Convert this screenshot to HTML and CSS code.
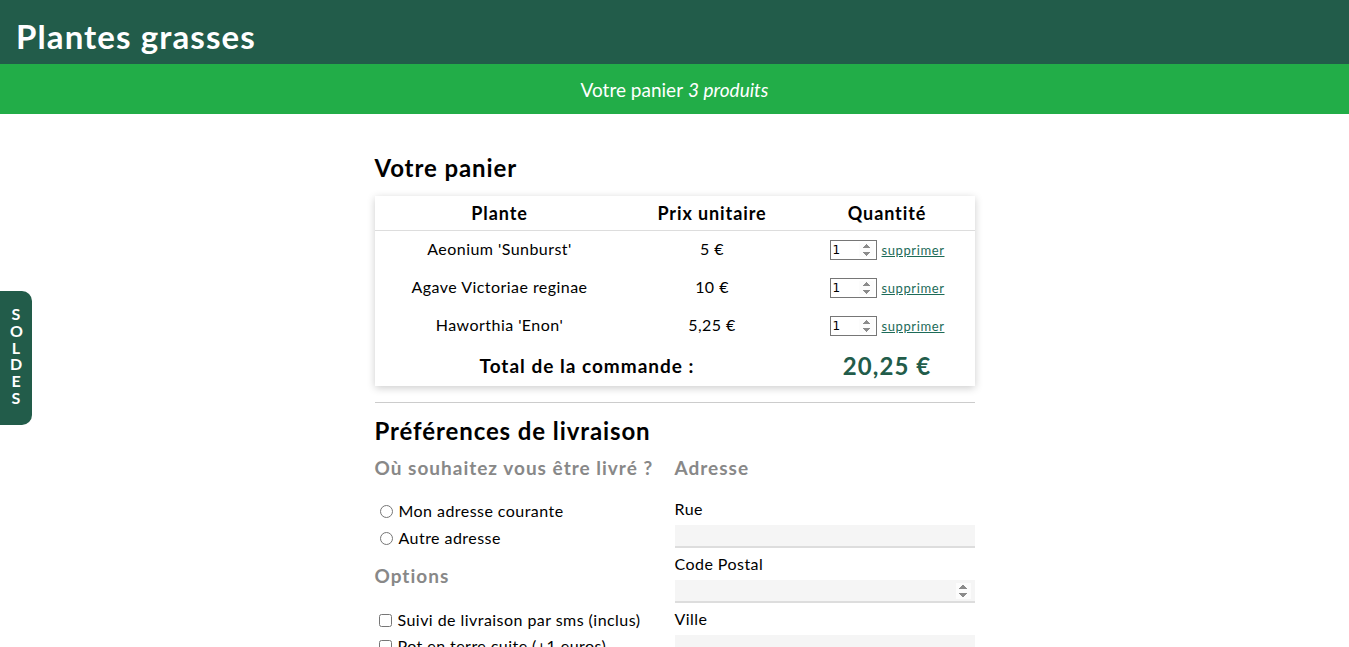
FILE: index.html
```html
<!DOCTYPE html>
<html lang="fr">
<head>
<meta charset="utf-8">
<title>Plantes grasses</title>
<link rel="stylesheet" href="styles.css">
</head>
<body>
<header class="site-header">
  <h1 class="site-title">Plantes grasses</h1>
</header>
<div class="cart-bar">Votre panier <em>3 produits</em></div>

<aside class="soldes-tab"><span class="soldes-text">SOLDES</span></aside>

<main class="main">
  <h2 class="section-title">Votre panier</h2>
  <table class="cart-table">
    <thead>
      <tr>
        <th class="col-plant">Plante</th>
        <th class="col-price">Prix unitaire</th>
        <th class="col-qty">Quantité</th>
      </tr>
    </thead>
    <tbody>
      <tr>
        <td>Aeonium 'Sunburst'</td>
        <td>5 €</td>
        <td><div class="qty"><input class="qty-input" type="number" value="1"><a class="remove" href="#">supprimer</a></div></td>
      </tr>
      <tr>
        <td>Agave Victoriae reginae</td>
        <td>10 €</td>
        <td><div class="qty"><input class="qty-input" type="number" value="1"><a class="remove" href="#">supprimer</a></div></td>
      </tr>
      <tr>
        <td>Haworthia 'Enon'</td>
        <td>5,25 €</td>
        <td><div class="qty"><input class="qty-input" type="number" value="1"><a class="remove" href="#">supprimer</a></div></td>
      </tr>
    </tbody>
    <tfoot>
      <tr class="total-row">
        <td colspan="2" class="total-label">Total de la commande :</td>
        <td class="total-value">20,25 €</td>
      </tr>
    </tfoot>
  </table>

  <hr class="divider">

  <h2 class="section-title prefs-title">Préférences de livraison</h2>
  <div class="prefs">
    <div class="prefs-col">
      <h3 class="sub-title">Où souhaitez vous être livré ?</h3>
      <label class="choice radio-choice"><input type="radio" name="where"> Mon adresse courante</label>
      <label class="choice radio-choice"><input type="radio" name="where"> Autre adresse</label>
      <h3 class="sub-title options-title">Options</h3>
      <label class="choice check-choice"><input type="checkbox"> Suivi de livraison par sms (inclus)</label>
      <label class="choice check-choice"><input type="checkbox"> Pot en terre cuite (+1 euros)</label>
    </div>
    <div class="prefs-col">
      <h3 class="sub-title address-title">Adresse</h3>
      <label class="field-label" for="rue">Rue</label>
      <input class="field-input" id="rue" type="text">
      <label class="field-label" for="cp">Code Postal</label>
      <input class="field-input" id="cp" type="number">
      <label class="field-label" for="ville">Ville</label>
      <input class="field-input" id="ville" type="text">
    </div>
  </div>
</main>
</body>
</html>
```

FILE: styles.css
```css
html, body {
  margin: 0;
  padding: 0;
}
body {
  font-family: "Lato", "Open Sans", sans-serif;
  color: #000;
  background: #fff;
  letter-spacing: 0.45px;
}
.site-header {
  background: #225c4a;
  height: 64px;
  box-sizing: border-box;
  padding: 16px 16px 0;
  overflow: hidden;
}
.site-title {
  margin: 0;
  color: #fff;
  font-size: 33px;
  font-weight: 700;
  line-height: 40px;
  letter-spacing: 1.1px;
}
.cart-bar {
  background: #22ad48;
  color: #fff;
  height: 50px;
  display: flex;
  align-items: center;
  justify-content: center;
  font-size: 19px;
  letter-spacing: 0;
  gap: 5px;
}
.cart-bar em {
  font-style: italic;
}
.soldes-tab {
  position: fixed;
  left: 0;
  top: 291px;
  width: 32px;
  height: 134px;
  box-sizing: border-box;
  background: #225c4a;
  color: #fff;
  border-radius: 0 10px 10px 0;
  display: flex;
  justify-content: center;
  padding-top: 15px;
}
.soldes-text {
  display: block;
  width: 12px;
  word-break: break-all;
  text-align: center;
  font-size: 16px;
  font-weight: 700;
  line-height: 16.8px;
  letter-spacing: 0;
}
.main {
  width: 600px;
  margin: 0 auto;
  padding-top: 40px;
}
.section-title {
  margin: 0 0 14px;
  font-size: 24px;
  font-weight: 700;
  line-height: 28px;
  letter-spacing: 0.9px;
}
.cart-table {
  width: 100%;
  border-collapse: collapse;
  box-shadow: 0 2px 8px rgba(0, 0, 0, 0.2);
  text-align: center;
  font-size: 16px;
}
.col-plant { width: 250px; }
.col-price { width: 175px; }
.col-qty { width: 175px; }
.cart-table th {
  font-size: 18px;
  font-weight: 700;
  letter-spacing: 0.9px;
  height: 34px;
  padding: 0;
  border-bottom: 1px solid #ddd;
}
.cart-table tbody td {
  height: 35px;
  padding: 0 0 3px;
}
.qty {
  display: flex;
  align-items: center;
  justify-content: center;
  gap: 5px;
  margin-top: 2px;
}
.qty-input {
  width: 47px;
  height: 20px;
  box-sizing: border-box;
  border: 1px solid #767676;
  font-family: "DejaVu Sans", sans-serif;
  font-size: 12px;
  letter-spacing: 0;
  padding: 0 2px;
  margin: 0;
}
.qty-input::-webkit-inner-spin-button,
.field-input::-webkit-inner-spin-button {
  opacity: 1;
}
.remove {
  color: #1d6b58;
  font-size: 13px;
  letter-spacing: 0.6px;
  text-decoration: underline;
}
.total-row td {
  height: 41px;
  padding: 0;
  font-weight: 700;
}
.total-label {
  font-size: 19px;
  letter-spacing: 1px;
}
.total-value {
  font-size: 24px;
  letter-spacing: 1.1px;
  color: #225c4a;
}
.divider {
  border: 0;
  border-top: 1px solid #ccc;
  margin: 16px 0 0;
}
.prefs-title {
  margin-top: 14px;
  margin-bottom: 0;
}
.prefs {
  display: grid;
  grid-template-columns: 300px 300px;
}
.prefs-col {
  display: flex;
  flex-direction: column;
}
.sub-title {
  color: #888;
  font-size: 19px;
  font-weight: 700;
  line-height: 22px;
  letter-spacing: 1px;
  margin: 12px 0 21px;
}
.options-title {
  margin-top: 11px;
  margin-bottom: 22px;
}
.address-title {
  margin-bottom: 19px;
}
.choice {
  display: flex;
  align-items: center;
  font-size: 16px;
  line-height: 22px;
  margin-bottom: 5px;
}
.choice input {
  margin: 0 6px 0 5px;
  width: 13px;
  height: 13px;
}
.check-choice {
  margin-bottom: 4px;
}
.check-choice input {
  margin: 0 6px 0 4px;
}
.field-label {
  font-size: 16px;
  line-height: 22px;
}
.field-input {
  height: 23px;
  box-sizing: border-box;
  background: #f5f5f5;
  border: 0;
  border-bottom: 2px solid #ddd;
  margin: 5px 0;
  padding: 0 4px;
  font-family: inherit;
}
```
